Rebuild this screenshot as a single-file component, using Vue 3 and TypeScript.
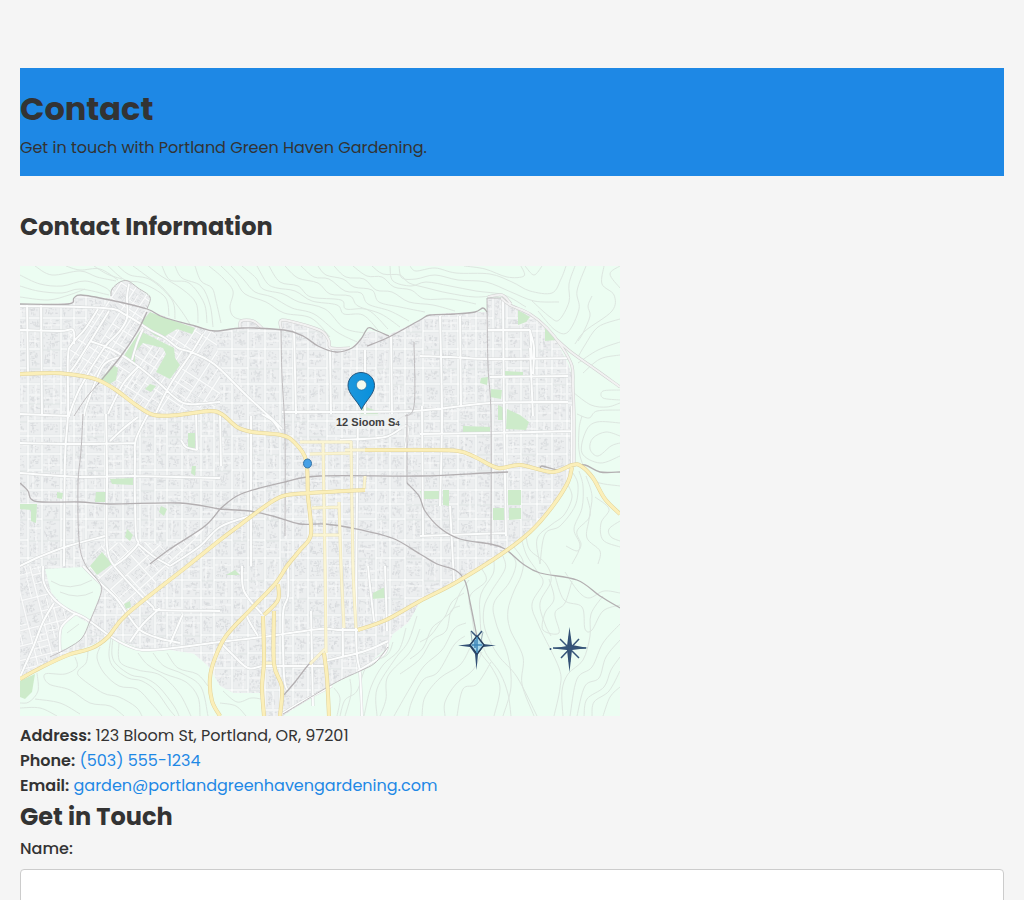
<script setup lang="ts">
import { ref } from 'vue'

const name = ref('')

type Point = [number, number]

function parse(list: string): Point[] {
  return list.split(' ').map((pair) => pair.split(',').map(Number) as Point)
}

// Smooth line through every point of the list.
function curve(list: string): string {
  const p = parse(list)
  let d = `M${p[0][0]} ${p[0][1]}`
  for (let i = 0; i < p.length - 1; i++) {
    const a = p[Math.max(0, i - 1)]
    const b = p[i]
    const c = p[i + 1]
    const e = p[Math.min(p.length - 1, i + 2)]
    const x1 = b[0] + (c[0] - a[0]) / 6
    const y1 = b[1] + (c[1] - a[1]) / 6
    const x2 = c[0] - (e[0] - b[0]) / 6
    const y2 = c[1] - (e[1] - b[1]) / 6
    d += `C${x1.toFixed(1)} ${y1.toFixed(1)} ${x2.toFixed(1)} ${y2.toFixed(1)} ${c[0]} ${c[1]}`
  }
  return d
}

const join = (lists: string[]): string => lists.map(curve).join('')

interface District {
  id: string
  area: string
  blocks: string
  houses: string
  lanes: string
  turn: string
}

// City blocks on an uneven grid, filled with short strokes for buildings.
function district(id: string, area: string, angle: number, box: number[], seed: number, xs?: number[]): District {
  let s = seed
  const rnd = () => {
    s = (s * 16807) % 2147483647
    return s / 2147483647
  }
  const [x0, y0, x1, y1] = box
  const cols = xs ? xs.slice() : [x0]
  while (cols[cols.length - 1] < x1) cols.push(cols[cols.length - 1] + 12 + Math.round(rnd() * 7))
  let blocks = ''
  let houses = ''
  let lanes = ''
  const rows = [y0]
  while (rows[rows.length - 1] < y1) rows.push(rows[rows.length - 1] + 13 + Math.round(rnd() * 9))
  for (let c = 0; c < cols.length - 1; c++) {
    for (let r = 0; r < rows.length - 1; r++) {
      const x = cols[c] + 1
      const y = rows[r] + 1
      const w = cols[c + 1] - cols[c] - 2
      const h = rows[r + 1] - rows[r] - (rnd() > 0.22 ? 2 : 0)
      blocks += `M${x} ${y}h${w}v${h}h${-w}z`
      if (rnd() > 0.5) lanes += `M${x + Math.round(w * (0.3 + rnd() * 0.4))} ${y}v${h}`
      if (rnd() > 0.55) lanes += `M${x} ${y + Math.round(h * (0.3 + rnd() * 0.4))}h${w}`
      const n = Math.round((w * h) / 9)
      for (let k = 0; k < n; k++) {
        const hx = (x + 1 + rnd() * (w - 4)).toFixed(1)
        const hy = (y + 1 + rnd() * (h - 4)).toFixed(1)
        const len = (1 + rnd() * 2).toFixed(1)
        houses += `M${hx} ${hy}${rnd() > 0.5 ? 'h' : 'v'}${len}`
      }
    }
  }
  return { id, area, blocks, houses, lanes, turn: `rotate(${angle})` }
}

const cityArea =
  '0,39 50,37 57,29 90,32 92,22 100,16 108,15 118,22 130,31 127,44 160,56 195,65 220,63 221,55 234,55 242,61 260,63 262,54 285,59 303,66 309,75 312,83 330,83 349,64 368,69 400,54 412,48 455,46 467,46 467,32 481,32 510,48 535,72 548,97 554,115 554,200 545,222 525,250 500,272 464,299 400,336 395,345 388,357 373,368 368,381 340,405 313,418 263,450 242,450 240,427 213,427 200,420 188,400 174,388 150,384 120,383 90,370 70,380 50,387 0,412'

const districts: District[] = [
  district('main', cityArea, 0, [-8, 14, 570, 460], 7321, [-8, 8, 22, 41, 54]),
  district('northwest', '50,68 80,44 91,30 92,22 100,16 108,15 118,22 130,31 127,44 195,65 200,102 200,140 160,145 128,146 100,125 78,114 50,108', 33, [40, -100, 270, 150], 517),
  district('southwest', '65,298 82,278 118,275 150,280 185,262 107,349 84,325', 48, [150, 50, 400, 240], 99),
  district('west', '0,300 22,300 24,317 43,340 55,348 42,361 40,386 0,411', -14, [-110, 270, 60, 420], 2113),
]

const pockets = [
  '25,303 63,301 80,318 81,327 70,354 55,345 43,340 31,326',
  '55,349 70,358 60,375 48,383 40,384 42,361',
]

const parks = [
  '130,46 140,50 175,62 172,68 157,63 142,72 135,70 125,61 120,58',
  '120,65 140,75 154,82 155,92 160,99 150,113 136,106 146,88 143,82 123,77 115,86 115,98 103,91',
  '93,99 98,102 96,114 88,119 80,114', '130,118 136,120 131,126 125,123',
  '498,44 510,51 506,56 498,59', '525,62 536,74 525,75',
  '485,105 503,106 503,110 484,110', '461,112 468,111 467,119 460,117', '471,123 482,124 481,133 470,131',
  '478,139 484,142 483,154 478,154', '487,143 500,149 509,156 506,164 486,163',
  '443,160 470,161 470,167 443,166', '168,167 175,167 175,184 168,182', '172,200 176,200 175,210 171,207',
  '90,213 113,212 113,219 92,218', '37,226 43,227 42,233 37,232', '76,226 86,226 86,236 75,236',
  '0,238 17,238 16,257 11,255 11,244 0,243', '141,240 147,243 144,250 139,246', '107,263 113,269 110,275 105,271',
  '70,300 82,286 92,298 77,309', '104,338 110,335 111,341 106,343',
  '488,224 501,224 501,239 488,239', '400,225 421,225 421,233 402,233', '423,224 429,224 429,240 423,239',
  '473,242 486,242 486,254 473,254', '489,242 501,242 501,253 489,254',
  '353,327 365,321 366,332 352,333', '206,309 215,304 220,309', '343,140 357,145 359,150 340,150',
  '0,415 15,408 12,426 5,433 0,431',
]

const contours = join([
  '0,9 20,18 42,20 65,15 86,22 92,29', '0,20 18,25 42,27 60,23 89,29', '0,31 28,34 49,29 65,23',
  '15,0 32,9 60,5 77,11 96,15', '46,0 60,4 80,3 98,14', '74,0 87,8 102,13', '88,0 105,14 122,17 145,31 149,50',
  '98,0 110,9 131,14 152,34 155,53', '113,0 128,11 143,22 160,43 170,58', '128,0 141,10 162,23 176,37 178,57',
  '142,0 150,14 169,17 184,37 187,57', '155,0 162,12 181,20 190,39 193,61', '175,0 181,15 192,22 196,35 201,57',
  '189,0 203,12 213,25 210,41 214,51 228,55', '201,0 215,14 225,28 246,36 264,47 291,52 310,71',
  '211,0 224,14 235,26 252,31 272,42 294,48 317,66 337,76', '222,0 236,12 243,23 263,28 279,36 305,43 324,62 345,67',
  '237,0 247,17 257,22 275,25 292,35 317,39 324,48 343,49 358,64', '249,0 260,16 278,20 291,31 321,34 326,43 348,44 368,63',
  '265,0 278,12 298,17 310,28 330,30 338,40 361,48 380,61', '281,0 294,11 309,13 325,25 341,27 348,38 370,45 389,55',
  '298,0 306,9 323,13 334,21 352,24 359,36 380,41 405,46', '314,0 326,11 344,13 356,24 372,26 389,36 413,39 435,45',
  '333,0 347,10 362,11 374,21 391,24 405,33 431,33 456,38', '352,0 363,8 380,9 389,17 407,22 428,27 455,31 479,29',
  '370,0 373,15 391,20 406,16 430,20 456,25 484,29 506,41', '379,0 382,12 396,13 415,9 438,14 466,16 491,26 514,35 539,36',
  '390,0 396,5 415,2 436,7 470,8 492,16 510,25 532,27 541,13 546,0', '444,0 465,3 487,11 504,10 501,0', '505,0 514,9 522,0',
  '555,0 549,18 549,36 539,54 530,51 512,35', '566,0 557,25 559,43 548,66 535,64 518,45', '584,0 582,18 594,29 592,45 565,65 555,78',
  '600,0 590,8 600,22', '600,53 578,61 565,79 558,91', '600,76 578,84 558,97', '572,30 568,40 570,50 563,67 558,75',
  '600,89 580,93 563,107', '600,124 583,125 583,132 600,134', '554,127 571,139 587,141 600,137', '557,148 569,152 577,145 600,144',
  '600,157 577,156 566,165 562,187 580,197 600,190', '600,170 586,166 573,172 570,183 578,190 591,180 600,177',
  '562,150 559,164 560,190 573,214 600,220', '553,207 558,219 555,240 540,260 525,268 520,298',
  '547,217 552,231 544,249 531,259 517,273 520,298', '559,205 563,220 562,242 554,263 560,280 552,298',
  '566,210 572,230 569,253 567,272 580,285 578,298', '575,231 589,243 581,257 583,274 600,281', '600,255 589,263 591,271 600,275',
  '546,280 557,285 561,278 557,265 570,250 567,231', '506,270 510,284 526,298 531,315 520,337 525,358 531,370',
  '502,275 507,290 517,305 523,317 512,338 519,360 539,402 540,422 534,450',
  '494,281 503,295 501,310 494,325 488,344 490,363 503,391 502,418 514,450',
  '490,286 496,298 489,317 474,337 476,357 488,390 491,421 483,450',
  '483,290 485,303 471,326 464,342 465,363 478,389 497,411 517,450',
  '474,295 473,308 461,328 460,350 464,383 480,407 488,428 491,450',
  '462,303 466,315 450,330 452,351 458,382 472,402 480,422 474,450',
  '449,314 440,327 432,345 423,353 411,369 400,376', '444,327 432,336 424,352 412,362 403,382 390,393',
  '440,340 431,345 426,365 412,374 400,393 380,408', '446,357 434,363 422,384 404,400 390,422 374,450',
  '445,370 434,379 418,406 403,414 392,435 388,450', '450,382 440,399 420,412 405,431 402,450',
  '462,386 453,404 436,418 425,436 425,450', '471,396 457,418 443,423 437,450',
  '529,313 534,333 525,347 523,364 539,367 535,347 545,337 552,315', '535,310 544,334 562,341 565,363 572,364 583,345 600,339',
  '545,306 558,325 569,332 584,325 600,327', '583,330 571,348 570,370 563,394 548,408 542,425 543,450',
  '600,358 583,377 572,401 557,413 550,450', '600,374 586,391 579,412 565,420 557,450',
  '600,391 591,404 584,421 567,433 564,450', '600,405 589,425 574,436 572,450', '600,421 590,431 583,450',
  '373,376 367,389 347,400 337,425 325,434 320,450', '386,362 379,384 363,399 351,421 344,450',
  '397,350 388,376 375,393 357,423 357,450', '400,363 390,386 368,410 366,433 360,450',
  '314,422 320,432 317,450', '330,413 331,428 325,450',
  '30,312 39,318 49,320 62,317 72,314', '39,307 49,315 62,314', '38,326 49,328 57,327 70,329', '45,334 56,328 63,323 74,325',
  '48,351 45,368 53,371', '63,359 53,367 47,377',
  '91,371 89,390 94,402 108,412 122,415 136,425 149,443 155,450', '93,371 92,389 97,399 111,409 125,412 139,421 154,440 159,450',
  '99,376 100,396 118,404 140,409 159,427 171,450', '118,387 128,399 145,408 166,416 178,431 180,450',
  '133,387 144,400 163,408 181,421 188,450', '147,387 158,402 177,408 188,420',
  '80,381 77,392 84,407 99,420 117,423 131,437 142,450',
  '68,385 66,397 58,405 61,412 83,427 99,431 116,441 122,450', '55,391 57,401 45,408 25,408 29,418 50,424 70,437 90,440 104,450',
  '17,407 18,425 9,436 0,437', '15,433 40,437 60,448', '0,442 20,442 37,450', '203,425 217,436 231,432 241,433', '200,437 216,440 226,450',
])

const streets = join([
  '0,40 84,42 106,49 130,64 145,72 158,82 171,86 188,94 200,103 226,129 252,153 262,163',
  '109,18 107,31 107,52 99,66 84,82 60,122 48,152', '78,43 65,63 52,78 48,91 48,148 45,192 44,300',
  '89,45 73,71 56,98 50,106', '0,64 40,65 53,64 54,78', '21,39 22,150', '7,39 8,108',
  '70,75 91,83 115,98 140,118 154,131 168,138 200,136', '183,68 172,86 150,119 136,147', '119,100 103,118 88,148',
  '123,63 117,77 112,94', '100,91 83,100 67,138 64,150', '128,148 116,173 115,193 115,236 116,270 118,278 105,292 94,300',
  '86,148 87,205 87,280 94,300', '0,300 19,291 48,280 85,270', '0,177 59,178 115,177', '0,207 60,211 115,210 200,212',
  '176,148 177,184', '161,174 166,181 177,184', '90,175 104,162 118,151',
  '118,278 133,290 150,300', '23,300 24,317 34,333 50,345 65,352 90,370 106,379 122,384 153,382 200,376 250,370 300,363 318,364 338,364',
  '63,300 78,315 96,332 108,349 120,364 138,372 160,377', '94,300 111,319 132,340 140,344 200,345',
  '0,411 14,379 23,356 34,337', '110,376 123,358 140,342', '150,378 163,348', '40,386 41,362 55,348',
  '150,300 180,280 200,261 230,250', '200,376 213,389 228,402 242,400', '222,300 224,325 242,348', '226,347 229,355 238,370',
  '268,300 268,330 263,348 264,410 268,425', '291,345 293,440', '322,300 323,390', '348,300 350,320 354,355', '365,300 367,365',
  '338,148 336,362 340,407 342,450', '338,405 363,389 368,378', '305,395 345,385 368,375', '242,400 305,400', '263,447 285,434 312,420',
  '200,148 201,200', '231,150 231,300', '242,148 253,155 260,165', '274,64 276,148', '310,84 311,148', '345,84 345,148',
  '371,70 372,148', '262,146 390,145 470,137 548,136', '552,140 552,200', '420,50 422,150 420,240', '440,50 441,140', '400,90 430,91 470,93 549,92',
  '467,64 510,64', '510,64 512,92', '483,34 484,150 486,270', '510,82 513,150', '548,110 470,111', '402,140 403,270', '0,148 50,150',
  '510,65 514,82 513,108', '385,184 387,160 365,171 320,174', '400,168 470,167 552,165', '430,240 434,315', '400,270 485,267',
])

const dark = join([
  '0,38 48,38 54,32 61,29 90,34 127,43 143,51 175,60 195,65 222,62 264,64 283,70 298,80 316,86 332,82 341,73 348,62 355,64 369,70',
  '347,80 369,71 400,54 410,49 435,48 455,46 463,42 467,46',
  '127,46 117,66 101,90 78,118',
  '0,217 8,225 11,233 22,236 60,236 90,238 160,237 200,243 230,245 256,251 280,258 305,258 332,262 372,272 400,288 417,298 435,304 445,315 450,336 457,371',
  '200,243 221,228 265,216 300,210 400,210 465,207 488,206', '200,243 185,260 150,283 130,298',
  '387,217 399,230 405,245 420,262 440,273 470,278 485,283 503,298 520,307 557,314 580,330 600,342',
  '552,200 565,199 580,206 600,206', '521,204 522,200 539,204 552,199', '263,430 275,416 290,397 303,387',
])

const faint = join([
  '467,32 468,100 471,150 471,280', '467,32 481,32', '261,64 262,110 265,170 265,270', '78,118 66,132 54,150',
  '91,30 92,23 100,16 108,15 118,22 130,31 127,43', '63,148 61,185 58,218 59,274 65,298 79,316 81,327 70,355 62,372 48,382 30,391',
  '394,76 394,140 382,151 372,157', '387,148 387,217', '368,381 355,397 340,405 313,418 263,448',
])

const rim = join([
  '481,32 490,39 510,48 527,62 542,81 552,100 553,120 554,150 554,200', '535,72 551,86 575,103 600,121',
  '468,31 482,29 491,38', '220,62 221,55 233,55 242,62', '261,63 262,54 285,59 303,66 309,75 311,82 330,82',
])

const highways = join([
  '0,108 35,107 62,110 78,114 96,124 116,139 134,149 158,149 190,145 203,149 217,161 232,166 261,169 274,176 286,194 288,230 291,268 280,284 267,300 255,318 230,344 206,370 195,392 190,412 192,435 200,450',
  '345,184 400,184 438,185 455,191 478,202 500,199 532,206 552,199 561,200 573,212 585,233 600,248',
  '552,201 548,216 532,241 510,266 480,289 435,317 400,335 366,354 338,364',
  '345,224 290,227 263,230 244,241 220,259 200,274 165,302 107,348 88,371 72,382 48,389 22,401 0,413',
  '304,387 307,412 309,450', '243,350 244,395 242,421 244,450', '254,345 254,398 262,421 260,450', '258,318 258,334 244,349',
])

const avenues = join([
  '303,175 305,300 306,387', '331,175 333,300 336,362', '319,236 321,300 324,362', '280,176 332,176', '290,188 332,187',
  '292,242 320,241', '290,269 320,269', '344,223 345,210', '244,397 254,397', '305,383 290,398', '325,184 346,184',
])
</script>

<template>
  <main class="page">
    <header class="banner">
      <h1>Contact</h1>
      <p>Get in touch with Portland Green Haven Gardening.</p>
    </header>

    <section class="info">
      <h2>Contact Information</h2>
      <svg class="map" viewBox="0 0 600 450" role="img" aria-label="Map of the area around Bloom St">
        <defs>
          <clipPath id="city"><polygon :points="cityArea" /></clipPath>
          <clipPath v-for="d in districts" :id="d.id" :key="d.id"><polygon :points="d.area" /></clipPath>
          <linearGradient id="pin" x1="0" x2="1">
            <stop offset="0" stop-color="#1d97dc" />
            <stop offset="1" stop-color="#0890dc" />
          </linearGradient>
        </defs>
        <rect class="land" width="600" height="450" />
        <path class="contour" :d="contours" />
        <g clip-path="url(#city)">
          <g v-for="d in districts" :key="d.id" :clip-path="`url(#${d.id})`">
            <rect class="ground" width="600" height="450" />
            <g :transform="d.turn">
              <path class="block" :d="d.blocks" />
              <path class="houses" :d="d.houses" />
              <path class="lane" :d="d.lanes" />
            </g>
          </g>
        </g>
        <polygon v-for="p in pockets" :key="p" class="land" :points="p" />
        <path class="contour" d="M31 315q18 12 41-1M40 326q18 8 33 0M47 367l12-9" />
        <polygon v-for="p in parks" :key="p" class="park" :points="p" />
        <path class="street-edge" :d="streets" />
        <path class="street" :d="streets" />
        <path class="rim-edge" :d="rim" />
        <path class="rim" :d="rim" />
        <path class="faint" :d="faint" />
        <path class="dark" :d="dark" />
        <path class="avenue-edge" :d="avenues" />
        <path class="avenue" :d="avenues" />
        <path class="highway-edge" :d="highways" />
        <path class="highway" :d="highways" />

        <ellipse class="dot" cx="287.5" cy="197.5" rx="4" ry="4.5" />
        <rect class="plate" x="315" y="148" width="70" height="15" />
        <path
          class="pin"
          fill="url(#pin)"
          d="M341.5 143.5C337 134 328 128 328 119.500C328 112 334 106.500 341 106.500C348.500 106.500 354.500 112 354.500 119.500C354.500 128 346 134 341.500 143.500Z"
        />
        <circle class="hole" cx="341.5" cy="119" r="5" />
        <text class="place" x="316" y="160">12 Sioom S<tspan class="tail">4</tspan></text>

        <g class="compass">
          <path d="M438 379.500L451 378L457 370L463 378L476 379.500L463 381L458 388L456.500 404L455 388L450 381Z" />
          <path class="cross" d="M451 365L457 371L462 365" />
          <path class="whisker" d="M451 366L452 375M463 366L461 375" />
          <path class="diamond" d="M457 370L464 379L457 388L450 379Z" />
          <path class="glow" d="M457 371V387M452 379H462M455 374V382" />
          <path d="M549.500 361L552 379L568 382L552 384L549.500 406L547 384L533 382.500L547 380Z" />
          <path class="cross" d="M540 373L559 392M559 373L541 392M533 382H566M549.500 370V396" />
          <circle cx="530.5" cy="383" r="1" />
        </g>
      </svg>

      <address class="details">
        <p><strong>Address:</strong> 123 Bloom St, Portland, OR, 97201</p>
        <p><strong>Phone:</strong> <a href="tel:5035551234">(503) 555-1234</a></p>
        <p><strong>Email:</strong> <a href="mailto:garden@portlandgreenhavengardening.com">garden@portlandgreenhavengardening.com</a></p>
      </address>
    </section>

    <section>
      <h2>Get in Touch</h2>
      <form @submit.prevent>
        <label for="name">Name:</label>
        <input id="name" v-model="name" type="text" name="name" />
      </form>
    </section>
  </main>
</template>

<style>
body {
  margin: 0;
  background: #f5f5f5;
}
</style>

<style scoped>
.page {
  padding: 68px 20px 0;
  color: #333;
  font-family: Poppins, Inter, sans-serif;
  font-size: 16px;
  line-height: 25px;
}

.banner {
  padding: 20px 0 16px;
  background: #1e88e5;
}

h1,
h2,
p {
  margin: 0;
}

h1 {
  font-size: 32px;
  line-height: 42px;
  font-weight: 700;
}

.banner p {
  margin-top: 5px;
}

h2 {
  font-size: 24px;
  line-height: 38px;
  font-weight: 700;
}

.info {
  padding-top: 32px;
}

.map {
  display: block;
  width: 100%;
  max-width: 600px;
  margin-top: 20px;
}

.details {
  margin-top: 7px;
  font-style: normal;
}

strong {
  font-weight: 600;
}

a {
  color: #1e88e5;
  text-decoration: none;
}

label {
  display: block;
  font-weight: 500;
}

input {
  display: block;
  box-sizing: border-box;
  width: 100%;
  height: 48px;
  margin-top: 8px;
  padding: 12px;
  border: 1px solid #ccc;
  border-radius: 4px;
  background: #fff;
  color: inherit;
  font: inherit;
}

.map path {
  fill: none;
  stroke-linejoin: round;
}

.land { fill: #ecfdf2; }
.map .contour { stroke: #dde6e0; stroke-width: 1; }
.ground { fill: #fafbfb; }
.map .block { fill: #eceeef; stroke: #dfe2e3; stroke-width: 0.5; }
.map .houses { stroke: #d6d9db; stroke-width: 0.7; }
.map .lane { stroke: #f9fafa; stroke-width: 1; }
.park { fill: #cdebca; }
.map .street-edge { stroke: #d5d8d8; stroke-width: 3; }
.map .street { stroke: #fcfdfd; stroke-width: 2; }
.map .rim-edge { stroke: #cfcfcf; stroke-width: 3; }
.map .rim { stroke: #f2f2f2; stroke-width: 2; }
.map .faint { stroke: #bfbcbe; stroke-width: 1; }
.map .dark { stroke: #b3afb1; stroke-width: 1.3; }
.map .avenue-edge { stroke: #ebe3b9; stroke-width: 3; }
.map .avenue { stroke: #fbf5d3; stroke-width: 2; }
.map .highway-edge { stroke: #e1d298; stroke-width: 4; }
.map .highway { stroke: #fbefb9; stroke-width: 3; }
.dot { fill: #46a0e6; stroke: #3673a6; stroke-width: 1; }
.plate { fill: #f0f2f2; fill-opacity: 0.8; }
.map .pin { fill: url(#pin); stroke: #24577f; stroke-width: 1; }
.hole { fill: #f3fbef; stroke: #24618c; stroke-width: 0.5; }

.place {
  fill: #404040;
  font-family: "Liberation Sans", sans-serif;
  font-size: 11px;
  font-weight: 700;
}

.tail { font-size: 8px; }
.compass { fill: #335075; }
.map .compass path { fill: #335075; }
.map .compass .cross { fill: none; stroke: #365579; stroke-width: 1.5; }
.map .compass .whisker { fill: none; stroke: #9fb3bd; stroke-width: 1; }
.map .compass .diamond { fill: #a9d8ec; stroke: #27405f; stroke-width: 1.5; }
.map .compass .glow { fill: none; stroke: #3f86b8; stroke-width: 1.5; }
</style>
